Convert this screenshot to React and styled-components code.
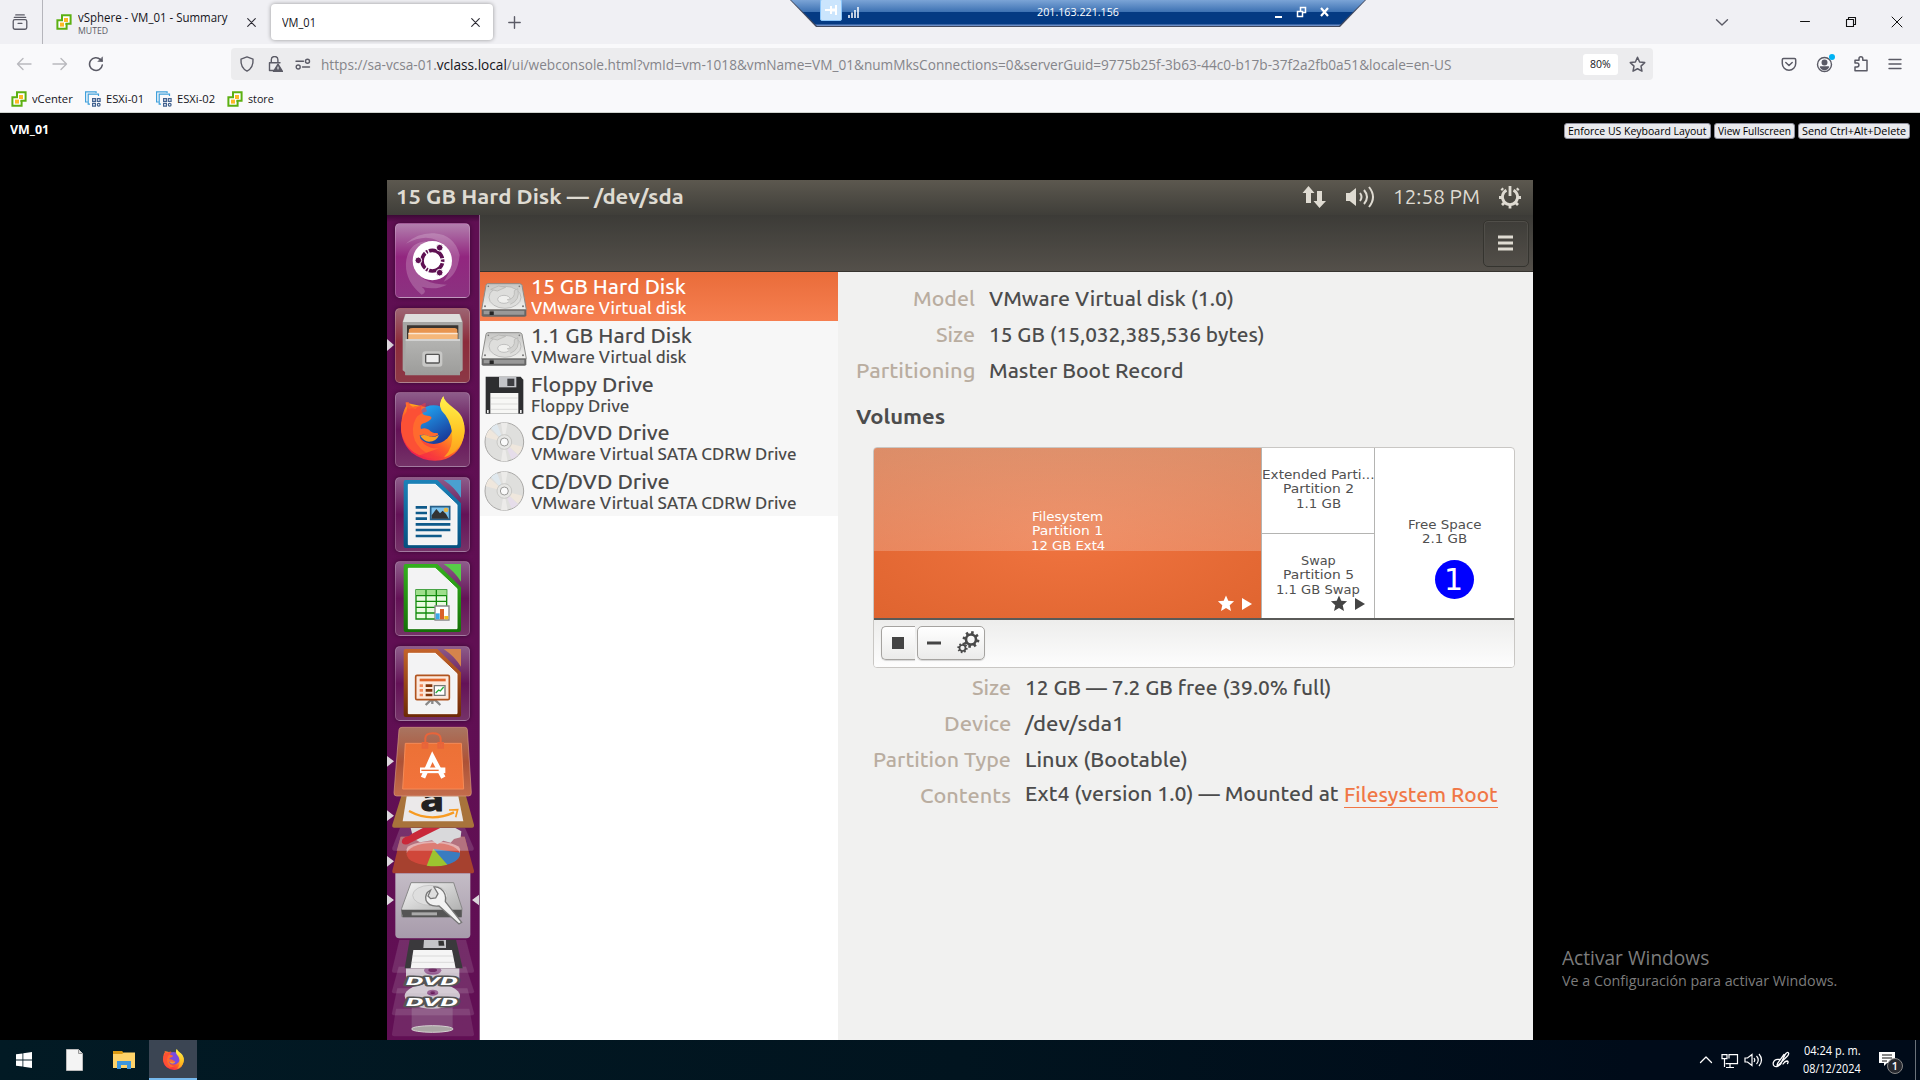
import React, { useLayoutEffect, useRef, useState } from "react";
import styled, { createGlobalStyle } from "styled-components";

const ui = `"Open Sans", "Noto Sans", sans-serif`;
const ubuntu = `Ubuntu, "Noto Sans", sans-serif`;

const Global = createGlobalStyle`
  * { box-sizing: border-box; }
  html, body { margin: 0; width: 1920px; height: 1080px; overflow: hidden; background: #000; }
  svg { display: block; flex: none; }
`;

/* Text whose glyphs are condensed or widened to fill a given width. */
const FitBox = styled.span`
  display: block;
  white-space: nowrap;
  flex: none;
`;
const FitInner = styled.span`
  display: inline-block;
  transform-origin: 0 50%;
`;
function Fit({ w, children }) {
  const ref = useRef(null);
  const [scale, setScale] = useState(1);
  useLayoutEffect(() => {
    setScale(w / ref.current.offsetWidth);
  }, [w]);
  return (
    <FitBox style={{ width: w }}>
      <FitInner ref={ref} style={{ transform: `scaleX(${scale})` }}>{children}</FitInner>
    </FitBox>
  );
}

const Screen = styled.div`
  position: relative;
  width: 1920px;
  height: 1080px;
  display: flex;
  flex-direction: column;
  background: #000;
  font-family: ${ui};
  overflow: hidden;
`;

/* ---------- Browser chrome ---------- */
const TabStrip = styled.div`
  height: 44px;
  display: flex;
  align-items: center;
  background: #f0f0f4;
  color: #15141a;
  font-size: 12px;
`;
const ViewCell = styled.div`
  width: 43px;
  height: 44px;
  padding-left: 12px;
  display: flex;
  align-items: center;
  border-right: 1px solid #b5b5bb;
`;
const Tab = styled.div`
  width: ${(p) => p.$w}px;
  height: 36px;
  padding: 0 ${(p) => p.$pr}px 0 ${(p) => p.$pl}px;
  display: flex;
  align-items: center;
  gap: 6px;
  border-radius: 4px;
  background: ${(p) => (p.$active ? "#fff" : "transparent")};
  box-shadow: ${(p) => (p.$active ? "0 0 4px rgba(0,0,0,.38)" : "none")};
`;
const TabText = styled.div`
  flex: 1;
  display: flex;
  flex-direction: column;
  align-items: flex-start;
  line-height: 15px;
  padding-top: 1px;
`;
const Muted = styled.div`
  font-size: 9px;
  line-height: 11px;
  color: #5b5b66;
`;
const TabButtons = styled.div`
  flex: 1;
  display: flex;
  align-items: center;
  padding-left: 15px;
`;
const WinButtons = styled.div`
  margin-left: auto;
  width: 206px;
  height: 44px;
  display: grid;
  grid-template-columns: 16px 53px 16px 16px;
  column-gap: 30px;
  align-items: center;
  svg { justify-self: end; }
`;
const ToolRow = styled.div`
  height: 40px;
  background: #f9f9fb;
  display: flex;
  align-items: center;
  padding: 0 16px 0 16px;
`;
const NavIcons = styled.div`
  width: 215px;
  display: flex;
  gap: 20px;
`;
const UrlBar = styled.div`
  width: 1422px;
  height: 32px;
  display: flex;
  align-items: center;
  background: #ececee;
  border-radius: 4px;
  padding: 0 7px 0 8px;
  font-size: 13.8px;
  color: #85858a;
  line-height: 20px;
  b { font-weight: 400; color: #15141a; }
`;
const UrlText = styled.div`
  padding-top: 2px;
`;
const UrlIcons = styled.div`
  width: 82px;
  display: flex;
  gap: 12px;
`;
const ZoomChip = styled.div`
  margin-left: auto;
  margin-right: 11px;
  width: 35px;
  height: 21px;
  display: flex;
  align-items: center;
  justify-content: center;
  background: #fff;
  border-radius: 3px;
  color: #15141a;
  font-size: 11px;
`;
const RightIcons = styled.div`
  margin-left: auto;
  margin-right: 1px;
  display: flex;
  align-items: center;
  gap: 18px;
`;
const Bookmarks = styled.div`
  height: 29px;
  background: #f9f9fb;
  border-bottom: 1px solid #cfd3cf;
  display: flex;
  align-items: center;
  padding: 1px 0 0 11px;
  gap: 12px;
  font-size: 11.5px;
  color: #15141a;
`;
const Bookmark = styled.div`
  display: flex;
  align-items: center;
  gap: 5px;
`;

/* ---------- Remote session bar ---------- */
const RdpBar = styled.div`
  position: absolute;
  left: 790px;
  top: 0;
  width: 576px;
  height: 27px;
  clip-path: polygon(0 0, 100% 0, 550px 100%, 26px 100%);
  background: #42485c;
`;
const RdpInner = styled.div`
  height: 26px;
  margin: 0 1px;
  clip-path: polygon(0 0, 100% 0, 548px 100%, 26px 100%);
  background: linear-gradient(#7ba4d6 0, #3f73b4 11.5px, #043a83 12px, #043a83 24px, #6d8dc4 25px);
  display: flex;
  align-items: center;
  padding: 0 33px 3px 29px;
  color: #fff;
  font-size: 11.5px;
`;
const PinButton = styled.div`
  width: 22px;
  height: 22px;
  margin-top: -3px;
  border: 1px solid #8cc6fa;
  border-radius: 2px;
  background: #cbe5fd;
  display: flex;
  align-items: center;
  justify-content: center;
`;
const RdpTitle = styled.div`
  flex: 1;
  padding-left: 173px;
  padding-top: 1px;
  line-height: 16px;
`;

/* ---------- Web console ---------- */
const ConsoleHead = styled.div`
  height: 67px;
  padding: 10px 10px 0 10px;
  display: flex;
  justify-content: space-between;
  align-items: flex-start;
  color: #fff;
  font-size: 11.5px;
`;
const VmName = styled.div`
  font-weight: 700;
  line-height: 14px;
`;
const ConsoleButtons = styled.div`
  display: flex;
  gap: 3px;
`;
const ConsoleButton = styled.div`
  height: 16px;
  width: ${(p) => p.$w}px;
  display: flex;
  align-items: center;
  justify-content: center;
  border: 1px solid #8f8f9d;
  border-radius: 3px;
  background: #e9e9ed;
  color: #000;
  font-size: 11px;
  line-height: 13px;
  padding-bottom: 1px;
`;
const Desktop = styled.div`
  width: 1146px;
  height: 860px;
  margin-left: 387px;
  display: flex;
  flex-direction: column;
  font-family: ${ubuntu};
  font-weight: 500;
  background: #f1f1f0;
`;
const Panel = styled.div`
  height: 35px;
  display: flex;
  align-items: center;
  padding: 0 11px 2px 9px;
  background: linear-gradient(#5c584f, #3f3e39);
  color: #dfdbd2;
  font-size: 20px;
`;
const PanelTitle = styled.div`
  font-weight: 700;
  flex: 1;
`;
const Indicators = styled.div`
  display: flex;
  align-items: center;
  gap: 18px;
  font-weight: 400;
`;
const Body = styled.div`
  height: 825px;
  display: flex;
`;
const Launcher = styled.div`
  width: 93px;
  height: 825px;
  padding-top: 8px;
  background: linear-gradient(#3c0936, #5f0f52 7px, #610f54);
  border-right: 1px solid #8a5c86;
  display: flex;
  flex-direction: column;
`;
const TileRow = styled.div`
  height: 84.6px;
  display: flex;
  align-items: flex-start;
`;
const Gutter = styled.div`
  width: 8px;
  height: 75px;
  display: flex;
  align-items: center;
`;
const Tile = styled.div`
  width: 75px;
  height: 75px;
  border-radius: 5px;
  border: 1px solid rgba(255, 255, 255, 0.2);
  background: ${(p) => p.$bg};
  box-shadow: 0 0 4px rgba(30, 0, 30, 0.6);
  svg { margin: -1px; }
`;
const Stack = styled.div`
  margin-top: -10.6px;
  height: 320px;
`;
const Window = styled.div`
  flex: 1;
  display: flex;
  flex-direction: column;
`;
const HeaderBar = styled.div`
  height: 57px;
  padding: 5px 4px 0 0;
  display: flex;
  justify-content: flex-end;
  background: linear-gradient(#3c3b37, #54504a);
  border-bottom: 1px solid #36342f;
`;
const MenuButton = styled.div`
  width: 46px;
  height: 47px;
  border: 1px solid #35342f;
  border-radius: 5px;
  box-shadow: inset 0 0 0 1px #504e49;
  display: flex;
  align-items: center;
  justify-content: center;
  padding: 0 1px 1px 0;
`;
const Columns = styled.div`
  flex: 1;
  display: flex;
`;
const DriveList = styled.div`
  width: 358px;
  background: #fff;
`;
const Drive = styled.div`
  height: 48.8px;
  display: flex;
  gap: 4px;
  padding-left: 1px;
  background: ${(p) => (p.$on ? "linear-gradient(#e96c3a, #f67f50)" : "#f7f7f7")};
  color: ${(p) => (p.$on ? "#fff" : "#4a4a4a")};
`;
const DriveText = styled.div`
  display: flex;
  flex-direction: column;
  padding-top: 3px;
`;
const DriveTitle = styled.div`
  font-size: 20.5px;
  line-height: 24px;
  height: 23px;
`;
const DriveSub = styled.div`
  font-size: 17.3px;
  line-height: 20px;
`;
const Details = styled.div`
  flex: 1;
  padding: 8px 18px 0;
  font-size: 20.3px;
  color: #4c4c4c;
`;
const Field = styled.div`
  height: 36px;
  display: flex;
  align-items: center;
  gap: ${(p) => p.$gap}px;
`;
const Label = styled.div`
  width: ${(p) => p.$w}px;
  display: flex;
  justify-content: flex-end;
  color: #b9ada0;
`;
const Value = styled.div`
  display: flex;
  gap: 5px;
`;
const Link = styled.span`
  color: #f07746;
  line-height: 25px;
  border-bottom: 1px solid #f07746;
`;
const Heading = styled.div`
  height: 59px;
  padding-top: 15px;
  font-weight: 700;
  line-height: 28px;
`;
const VolumeBox = styled.div`
  position: relative;
  margin-left: 17px;
  width: 642px;
  height: 221px;
  border: 1px solid #c9c7c4;
  border-radius: 4px;
  overflow: hidden;
  display: flex;
  flex-direction: column;
  background: #fff;
`;
const Grid = styled.div`
  height: 172px;
  display: grid;
  grid-template-columns: 387px 113px 1fr;
  border-bottom: 2px solid #5a5a58;
  font-family: "DejaVu Sans", sans-serif;
  font-weight: 400;
  font-size: 12.5px;
  line-height: 14.4px;
  color: #505050;
`;
const Part = styled.div`
  position: relative;
  display: flex;
  flex-direction: column;
  align-items: center;
  justify-content: center;
  padding-bottom: ${(p) => p.$low || 0}px;
  border-left: ${(p) => (p.$line ? "1px solid #b4b4b2" : "none")};
  border-bottom: ${(p) => (p.$under ? "1px solid #b4b4b2" : "none")};
`;
const MainPart = styled(Part)`
  color: #fff;
  background:
    linear-gradient(rgba(214, 214, 205, 0.36), rgba(245, 205, 190, 0.30)) 0 0 / 100% 103px no-repeat,
    radial-gradient(ellipse at 50% 50%, #f07440 0, #df642f 100%);
`;
const Split = styled.div`
  display: grid;
  grid-template-rows: 86px 1fr;
`;
const Marks = styled.div`
  position: absolute;
  right: 8px;
  bottom: 5px;
`;
const Actions = styled.div`
  flex: 1;
  padding: 6px 7px;
  display: flex;
  gap: 2px;
  background: linear-gradient(#ededec, #fdfdfd);
`;
const ActionGroup = styled.div`
  width: ${(p) => p.$w}px;
  height: 34px;
  border: 1px solid #a5a3a0;
  border-right-width: ${(p) => (p.$open ? 0 : 1)}px;
  border-radius: ${(p) => (p.$open ? "5px 0 0 5px" : "5px")};
  background: linear-gradient(#fff, #ebebea);
  box-shadow: 0 1px 1px rgba(0, 0, 0, 0.15);
  display: flex;
  align-items: center;
`;
const Badge = styled.div`
  position: absolute;
  left: 561px;
  top: 112px;
  width: 39px;
  height: 39px;
  border-radius: 50%;
  background: #0000ff;
  color: #fff;
  font: 30px/39px "DejaVu Sans", sans-serif;
  text-align: center;
  text-indent: -2px;
`;
const Lower = styled.div`
  padding-top: 1px;
`;

/* ---------- Host desktop ---------- */
const Watermark = styled.div`
  position: absolute;
  left: 1562px;
  top: 944px;
  color: #7c7c7c;
`;
const WatermarkTitle = styled.div`
  font-size: 19.4px;
  line-height: 28px;
`;
const WatermarkText = styled.div`
  font-size: 14.4px;
  line-height: 18px;
`;
const Taskbar = styled.div`
  height: 40px;
  display: flex;
  background: linear-gradient(90deg, #021a24, #01141f 50%, #000b19 85%);
  color: #fff;
`;
const TaskItem = styled.div`
  width: ${(p) => p.$w}px;
  display: flex;
  align-items: center;
  justify-content: center;
  padding-right: ${(p) => p.$pr || 0}px;
  background: ${(p) => (p.$on ? "#3b4553" : "transparent")};
  border-bottom: ${(p) => (p.$on ? "2px solid #76b9ed" : "none")};
`;
const Tray = styled.div`
  margin-left: auto;
  width: 221px;
  display: flex;
  align-items: center;
`;
const Clock = styled.div`
  width: 89px;
  padding: 0 18px 1px 13px;
  display: flex;
  flex-direction: column;
  align-items: center;
  font-size: 11.8px;
  line-height: 17.5px;
`;
const ShowDesktop = styled.div`
  margin-left: 10px;
  width: 5px;
  height: 40px;
  border-left: 1px solid #6a727a;
`;

/* ---------- Icons ---------- */
const Line = ({ s = 16, c = "#5b5b66", w = 1.4, vb = "0 0 16 16", children }) => (
  <svg width={s} height={s} viewBox={vb} fill="none" stroke={c} strokeWidth={w} strokeLinecap="round" strokeLinejoin="round">
    {children}
  </svg>
);
const VsphereIcon = () => (
  <svg width="16" height="16" viewBox="0 0 16 16">
    <path d="M6 1.2h8.6v8.6h-4v5H1.4V6.200H6z" fill="#fff" stroke="#5cb012" strokeWidth="2" />
    <path d="M6 5.500v1M10.500 10h-1" stroke="#5cb012" strokeWidth="2" />
    <rect x="8" y="4" width="4" height="4" fill="#fdb827" />
    <rect x="4" y="8.600" width="4" height="4" fill="#fdb827" />
  </svg>
);
const EsxiIcon = () => (
  <svg width="16" height="16" viewBox="0 0 16 16" fill="none" stroke="#3fa0dc" strokeWidth="1.200">
    <path d="M2.500 11H.6V.8h10.500V2M5 13.200H3.200V3.200h10.300V5" />
    <g stroke="#41618f" strokeWidth="1.200"><path d="M7.600 7.600h2.800v2.800H7.600zM12.300 7.600h2.800v2.800h-2.800zM7.600 12.400h2.800v2.800H7.600z" /><circle cx="13.700" cy="13.800" r="1.400" /></g>
  </svg>
);
const CloseIcon = ({ s = 9 }) => <Line s={s} vb="0 0 9 9" w={1.1} c="#2b2a33"><path d="M.7.7l7.600 7.600M8.300.7L.7 8.300" /></Line>;
const Star = ({ cx, cy, r, fill }) => {
  const pts = Array.from({ length: 10 }, (_, i) => {
    const a = (Math.PI / 5) * i - Math.PI / 2;
    const q = i % 2 ? r * 0.46 : r;
    return `${cx + q * Math.cos(a)},${cy + q * Math.sin(a)}`;
  }).join(" ");
  return <polygon points={pts} fill={fill} />;
};
const MarksIcon = ({ c }) => (
  <svg width="36" height="18" viewBox="0 0 36 18">
    <Star cx={9} cy={9} r={8.5} fill={c} />
    <path d="M25 3v12l10-6z" fill={c} />
  </svg>
);
const Gear = ({ cx, cy, r, t, c }) => (
  <g fill="none" stroke={c}>
    <circle cx={cx} cy={cy} r={r} strokeWidth={t} />
    {Array.from({ length: 8 }, (_, i) => {
      const a = (Math.PI / 4) * i + 0.2;
      return <path key={i} strokeWidth={t} d={`M${cx + r * Math.cos(a)} ${cy + r * Math.sin(a)}L${cx + (r + t * 1.3) * Math.cos(a)} ${cy + (r + t * 1.3) * Math.sin(a)}`} />;
    })}
  </g>
);
const Pointer = () => <svg width="8" height="12" viewBox="0 0 8 12"><path d="M0 0v12l7-6z" fill="#dcd6dc" /></svg>;

const HddIcon = () => (
  <svg width="46" height="49" viewBox="0 0 138 147">
    <defs><linearGradient id="hd" x1="0" y1="0" x2="0" y2="1"><stop offset="0" stopColor="#c6c6c4" /><stop offset="1" stopColor="#f0f0ee" /></linearGradient></defs>
    <path d="M20 35h96q5 0 7 5l13 73H2l13-73q1-5 5-5z" fill="url(#hd)" stroke="#8d8d8a" strokeWidth="3" />
    <path d="M2 113h134v17q0 4-5 4H7q-5 0-5-4z" fill="#666" />
    <path d="M8 116h18v11H8zM38 116h92v12H38z" fill="#999" />
    <path d="M26 119h12v10H26z" fill="#252525" />
    <ellipse cx="72" cy="76" rx="48" ry="33" fill="#dededc" stroke="#aaa" strokeWidth="2" />
    <ellipse cx="69" cy="82" rx="19" ry="12" fill="#efefed" stroke="#aaa" strokeWidth="2" />
    <path d="M78 83q25-1 22-27l10-6q9 34-22 47M29 52l24-10 21 4-25 11z" fill="#d2d2d0" stroke="#b0b0ae" strokeWidth="2" />
    <g fill="#777"><circle cx="22" cy="43" r="2.500" /><circle cx="115" cy="43" r="2.500" /><circle cx="12" cy="103" r="3" /><circle cx="126" cy="103" r="3" /></g>
  </svg>
);
const FloppyIcon = () => (
  <svg width="46" height="49" viewBox="0 0 138 147">
    <path d="M14 20h105l8 9v102H14z" fill="#2d2e30" />
    <path d="M54 21h52v31H54z" fill="#c3c5c9" /><path d="M79 26h21v22H79z" fill="#3d3e42" />
    <path d="M28 69h84v62H28z" fill="#f7f7f5" />
    <path d="M30 84h80M30 102h80M30 118h80" stroke="#cfcfcb" strokeWidth="2" />
    <path d="M18 120h5v9h-5zM117 120h5v9h-5z" fill="#eee" />
  </svg>
);
const DiscIcon = () => (
  <svg width="46" height="49" viewBox="0 0 138 147">
    <circle cx="70" cy="72" r="58" fill="#dfdfdd" stroke="#aaa9a7" strokeWidth="3" />
    <path d="M69 72L14 58q3-14 12-24zM69 72l55 14q-3 14-13 24z" fill="#efe7dd" />
    <path d="M69 72L30 30q8-8 18-12z" fill="#dfe8ee" />
    <path d="M69 72l42 40q-8 8-19 12z" fill="#e6ddea" />
    <path d="M69 72L60 14h20zM69 72L60 130h20z" fill="#ecebe9" />
    <circle cx="70" cy="72" r="22" fill="#e6e6e4" stroke="#b9b9b7" strokeWidth="2" />
    <circle cx="70" cy="72" r="12" fill="#fafafa" stroke="#9a9a98" strokeWidth="3" />
  </svg>
);

const DashArt = () => (
  <svg width="75" height="75" viewBox="0 0 225 225">
    <path d="M32 62Q70 28 118 31q60 4 76 65-6 64-48 80 40-55 10-100Q110 20 32 62z" fill="#fff" opacity=".2" />
    <path d="M80 215Q25 170 34 110q10-52 60-55-50 30-36 78 20 52 98 52-35 18-76 6 20 15 0 24z" fill="#fff" opacity=".2" />
    <circle cx="112" cy="113" r="59" fill="#fff" />
    <circle cx="112" cy="113" r="31" fill="none" stroke="#5f1152" strokeWidth="11" />
    <g stroke="#fff" strokeWidth="4"><path d="M112 113l38-7M112 113l38 7M112 113L97 77M112 113l-24-29M112 113l-15 36M112 113l-24 29" /></g>
    <circle cx="112" cy="113" r="24" fill="#fff" />
    <g fill="#5f1152" stroke="#fff" strokeWidth="3"><circle cx="70" cy="112" r="10" /><circle cx="134" cy="74" r="10" /><circle cx="134" cy="149" r="10" /></g>
  </svg>
);
const FilesArt = () => (
  <svg width="75" height="75" viewBox="0 0 225 225">
    <defs><linearGradient id="cab" x1="0" y1="0" x2="0" y2="1"><stop offset="0" stopColor="#b4b4b2" /><stop offset="1" stopColor="#9c9c9a" /></linearGradient></defs>
    <path d="M30 19h165l8 22v146l-9 6v8H31v-8l-8-6V41z" fill="#a5a5a3" />
    <path d="M32 18h161l8 24H24z" fill="#dededc" />
    <path d="M36 52h154v44H36z" fill="#39342f" />
    <path d="M42 64q3-4 12-4h125q8 0 8 8v28H40z" fill="#e89550" /><path d="M40 76h148v20H40z" fill="#f5b77a" /><path d="M40 74h148v5H40z" fill="#fff" opacity=".7" />
    <path d="M32 94h163v108H31z" fill="url(#cab)" /><path d="M32 94h163v4H32z" fill="#ddd" />
    <rect x="82" y="130" width="60" height="46" rx="9" fill="#c8c8c6" /><rect x="92" y="139" width="41" height="26" rx="3" fill="#eee" stroke="#555" strokeWidth="4" />
  </svg>
);
const FirefoxArt = ({ s = 75, vb = "0 0 225 225", core = "url(#fx2)" }) => (
  <svg width={s} height={s} viewBox={vb}>
    <defs>
      <linearGradient id="fx1" x1=".8" y1=".1" x2=".2" y2=".9"><stop offset="0" stopColor="#fff04a" /><stop offset=".35" stopColor="#ffad1c" /><stop offset=".65" stopColor="#ff5a2c" /><stop offset="1" stopColor="#f0204e" /></linearGradient>
      <linearGradient id="fx2" x1="0" y1="0" x2=".6" y2="1"><stop offset="0" stopColor="#21b4ff" /><stop offset="1" stopColor="#1a3b9a" /></linearGradient>
      <linearGradient id="fx3" x1="0" y1="0" x2="0" y2="1"><stop offset="0" stopColor="#fff24d" /><stop offset=".6" stopColor="#ffc423" /><stop offset="1" stopColor="#ff9a20" /></linearGradient>
    </defs>
    {/* tail and body ring around the globe */}
    <path d="M40 34Q24 52 20 84q-10 60 30 98 40 30 88 23 60-14 70-80 4-50-26-72-36-26-37-40-10 14-10 42z" fill="url(#fx1)" />
    <circle cx="116" cy="98" r="58" fill={core} />
    <path d="M145 13q4 22 26 38 40 30 38 65-5 60-62 80 30-30 24-76-6-40-31-64-12-20 5-43z" fill="url(#fx3)" />
    {/* head, muzzle and paw */}
    <path d="M42 31Q36 44 34 60 18 80 18 108q6 60 56 82l60-22q-24 4-44-10-14-10-16-28 14-4 26 2 12 6 28-3 4-6-4-6-14 0-22-10-12-8-24-2-4-10 4-16 24-8 28-18-2-6-12-6-10 0-14-4-8-14-4-28-14 4-18 12-12-4-20 0-10-2-10-20z" fill="#ff6a2e" />
    <path d="M42 31Q36 44 34 60 18 80 18 108q6 60 56 82 34 16 70 6-60-4-84-50-14-36 2-66 8-14 34-22-6-10-4-26-14 4-18 12-12-4-20 0-10-2-12-13z" fill="#fa3a3c" opacity=".55" />
    <path d="M76 131q14-5 26 2 14 6 30-4-8 20-30 20-16-2-26-18z" fill="#ffa122" />
  </svg>
);
const OfficeArt = ({ c, d, l, children }) => (
  <svg width="75" height="75" viewBox="0 0 225 225">
    <defs><linearGradient id={`of${c.slice(1)}`} x1="0" y1="0" x2="0" y2="1"><stop offset="0" stopColor={c} /><stop offset="1" stopColor={d} /></linearGradient></defs>
    <path d="M32 9h95l71 70v128q0 6-6 6H32q-6 0-6-6V15q0-6 6-6z" fill={`url(#of${c.slice(1)})`} />
    <path d="M146 9h52v53q-10-15-22-28T146 9z" fill={l} />
    <path d="M40 22h81l65 61v120H40z" fill="#f3f3f4" stroke="#fff" strokeWidth="3" />
    {children}
  </svg>
);
const WriterArt = () => (
  <OfficeArt c="#1b82b8" d="#06507f" l="#4aa0d0">
    <path d="M62 91h34M62 108h34M62 125h34M62 142h104M62 159h104M62 177h78" stroke="#0e5a8a" strokeWidth="8" />
    <path d="M107 89h57v38h-57z" fill="#7fc4ee" stroke="#27608a" strokeWidth="5" /><path d="M110 125v-10l14-19 11 13 8-8 10 10 8 14z" fill="#333" /><circle cx="153" cy="99" r="7" fill="#e5b84a" />
  </OfficeArt>
);
const CalcArt = () => (
  <OfficeArt c="#35b01e" d="#157008" l="#57cc48">
    <path d="M63 87h92v87H63z" fill="#e8fbe0" stroke="#128a0c" strokeWidth="4" /><path d="M63 87h92v17H63z" fill="#9fdf8c" />
    <path d="M63 104h92M63 121h92M63 139h92M63 156h92M93 87v87M124 87v87" stroke="#128a0c" strokeWidth="4" />
    <path d="M120 135h42v42h-42z" fill="#fff" stroke="#888" strokeWidth="4" /><path d="M122 157h12v18h-12z" fill="#3aa8e8" /><path d="M135 144h12v31h-12z" fill="#d9622b" /><path d="M148 165h12v10h-12z" fill="#f0be20" />
  </OfficeArt>
);
const ImpressArt = () => (
  <OfficeArt c="#c4632a" d="#6d2a05" l="#d5844c">
    <path d="M92 177l16-15h12l16 15M112 160v14" stroke="#888" strokeWidth="7" fill="none" />
    <rect x="62" y="88" width="101" height="73" rx="4" fill="#fce8dc" stroke="#b1541f" strokeWidth="5" />
    <path d="M74 102h78" stroke="#e0652a" strokeWidth="8" />
    <path d="M74 119h10M74 133h10M74 147h10" stroke="#f28a5c" strokeWidth="8" /><path d="M92 119h20M92 133h20M92 147h20" stroke="#82340a" strokeWidth="8" />
    <path d="M118 119h32v29h-32z" fill="#fff" stroke="#777" strokeWidth="4" /><path d="M122 141l9-9 5 3 10-12" stroke="#24ac3a" strokeWidth="4" fill="none" />
  </OfficeArt>
);

const StackArt = () => (
  <svg width="92" height="320" viewBox="21 0 276 960">
    <defs>
      <linearGradient id="sw" x1="0" y1="0" x2="0" y2="1"><stop offset="0" stopColor="#a97561" /><stop offset=".5" stopColor="#ad5236" /><stop offset="1" stopColor="#c36c4c" /></linearGradient>
      <linearGradient id="bag" x1="0" y1="0" x2="0" y2="1"><stop offset="0" stopColor="#ec7136" /><stop offset="1" stopColor="#f2733c" /></linearGradient>
      <linearGradient id="dk" x1="0" y1="0" x2="0" y2="1"><stop offset="0" stopColor="#c4bcc6" /><stop offset="1" stopColor="#a79bab" /></linearGradient>
      <linearGradient id="met" x1="0" y1="0" x2="1" y2="1"><stop offset="0" stopColor="#f6f6f6" /><stop offset="1" stopColor="#a9a9a9" /></linearGradient>
    </defs>
    {/* bin */}
    <path d="M48 866h220l14 76q1 7-6 7H42q-7 0-6-7z" fill="#fff" opacity=".1" />
    <path d="M95 862h123v65q-8 9-61 9t-62-9z" fill="#a48aa4" opacity=".35" /><ellipse cx="157" cy="927" rx="62" ry="10" fill="#aaa6a4" stroke="#d6d2d2" strokeWidth="3" />
    {/* second disc */}
    <path d="M52 805h210l20 75q1 6-6 6H42q-7 0-6-6z" fill="#fff" opacity=".12" stroke="#fff" strokeOpacity=".4" />
    <ellipse cx="157" cy="828" rx="83" ry="38" fill="#cfc5cf" /><ellipse cx="158" cy="818" rx="17" ry="9" fill="#8d4f88" /><ellipse cx="158" cy="818" rx="7" ry="4" fill="#5e0f52" />
    <text x="156" y="859" textAnchor="middle" textLength="158" lengthAdjust="spacingAndGlyphs" fontFamily="DejaVu Sans" fontWeight="700" fontStyle="italic" fontSize="32" fill="#fff" stroke="#555" strokeWidth="9" strokeLinejoin="round" paintOrder="stroke">DVD</text>
    {/* first disc */}
    <path d="M56 740h202l24 74q1 6-6 6H42q-7 0-6-6z" fill="#fff" opacity=".12" stroke="#fff" strokeOpacity=".4" />
    <path d="M78 745h160v42H78z" fill="#cfc5cf" /><ellipse cx="158" cy="751" rx="26" ry="13" fill="#93598f" /><ellipse cx="158" cy="750" rx="13" ry="6" fill="#5e0f52" />
    <text x="156" y="794" textAnchor="middle" textLength="158" lengthAdjust="spacingAndGlyphs" fontFamily="DejaVu Sans" fontWeight="700" fontStyle="italic" fontSize="32" fill="#fff" stroke="#555" strokeWidth="9" strokeLinejoin="round" paintOrder="stroke">DVD</text>
    {/* floppy */}
    <path d="M58 660h200l24 92q1 6-6 6H42q-7 0-6-6z" fill="#fff" opacity=".12" stroke="#fff" strokeOpacity=".4" />
    <path d="M89 659h139l20 86H74z" fill="#3a393c" /><path d="M132 660h66v24h-68z" fill="#c4c4c8" /><path d="M175 662h16l2 15h-17z" fill="#333" />
    <path d="M100 690h116l11 55H92z" fill="#f5f5f5" /><path d="M98 708h122M95 727h128" stroke="#ccc" strokeWidth="2" />
    {/* disk usage */}
    <path d="M62 350h192l28 102q1 8-7 8H43q-7 0-6-8z" fill="#a6412f" /><path d="M62 350h192l11 42H50z" fill="#94384a" />
    <path d="M80 400v-12a80 24 0 01160 0v12z" fill="#d99090" />
    <ellipse cx="160" cy="403" rx="80" ry="34" fill="#d0473a" /><path d="M160 386l80 12q2 24-40 36z" fill="#3a7cc0" /><path d="M160 386l42 48q-30 8-62 3z" fill="#9cc430" />
    <path d="M62 350h192l11 42H50z" fill="#fff" opacity=".18" />
    {/* system settings */}
    <path d="M60 324h195l26 60q1 8-6 8H43q-7 0-6-8z" fill="#fff" opacity=".14" stroke="#fff" strokeOpacity=".4" />
    <path d="M92 324h134l18 10-2 18-20 5-10 11-22-6-18 11-16-12-18 3-18 3-20-12z" fill="#d9d9db" />
    <path d="M130 323h52l-92 46q-14 9-24 0-3-12 10-18 14-3 20-10z" fill="#c9283a" />
    {/* web shop */}
    <path d="M64 228h194l24 86q1 9-6 9H43q-8 0-6-9z" fill="#a8733b" />
    <path d="M80 229h155l15 75H68z" fill="#ebe9ea" />
    <clipPath id="shop"><path d="M80 231h155v73H80z" /></clipPath>
    <text clipPath="url(#shop)" x="157" y="273" textAnchor="middle" fontFamily="Open Sans, sans-serif" fontWeight="700" fontSize="98" textLength="72" lengthAdjust="spacingAndGlyphs" stroke="#222" strokeWidth="3" fill="#222">a</text>
    <path d="M87 273q66 36 135 4" fill="none" stroke="#f79b23" strokeWidth="7" /><path d="M207 270l26-1-6 23" fill="none" stroke="#f79b23" strokeWidth="5" />
    {/* software */}
    <path d="M66 22h188q7 0 8 7l12 189q0 10-8 10H50q-9 0-8-10L57 29q1-7 9-7z" fill="url(#sw)" stroke="#d59a82" strokeWidth="2" />
    <path d="M76 70h168l7 137H68z" fill="url(#bag)" stroke="#f58b57" strokeWidth="3" />
    <path d="M136 83V55q0-15 22-15t24 15v28M128 69h14v14h-14zM175 69h14v14h-14z" fill="none" stroke="#e8643a" strokeWidth="6" />
    <g stroke="#fff" fill="none"><path d="M129 173l28-63 33 63" strokeWidth="14" /><path d="M120 151h76" strokeWidth="17" /><path d="M124 151h52" stroke="#ee7138" strokeWidth="4" /></g>
    {/* disks */}
    <path d="M46 460h225v183q0 12-12 12H58q-12 0-12-12z" fill="url(#dk)" />
    <path d="M93 488h128l25 77-2 25H65v-25z" fill="url(#met)" stroke="#888" strokeWidth="3" />
    <path d="M64 569h181v23H68z" fill="#555" /><path d="M95 577h76v9H95z" fill="#aaa" />
    <ellipse cx="150" cy="526" rx="52" ry="30" fill="#dedede" stroke="#bbb" strokeWidth="2" />
    <path d="M152 510q-19 10-14 31 8 20 39 17l60 54 8-5-49-62q4-25-13-38-12-8-21-6l12 20-7 13-15 2-8-8z" fill="#f2f2f2" stroke="#777" strokeWidth="4" />
    <g fill="#dcd6dc"><path d="M21 108v32l21-16zM21 271v32l21-16zM21 408v32l21-16zM21 524v32l21-16zM297 524v32l-21-16z" /></g>
  </svg>
);

const tiles = [
  ["linear-gradient(#b27fae, #92267f 45%, #8b3280)", DashArt],
  ["linear-gradient(#9d6472, #8c2c3b 45%, #8c3846)", FilesArt, true],
  ["linear-gradient(#8d5c8a, #641257 50%, #753268)", FirefoxArt],
  ["linear-gradient(#8d5c8a, #641257 50%, #753268)", WriterArt],
  ["linear-gradient(#8d5c8a, #641257 50%, #753268)", CalcArt],
  ["linear-gradient(#8d5c8a, #641257 50%, #753268)", ImpressArt],
];
const drives = [
  [HddIcon, "15 GB Hard Disk", 155, "VMware Virtual disk", 156, true],
  [HddIcon, "1.1 GB Hard Disk", 161, "VMware Virtual disk", 156],
  [FloppyIcon, "Floppy Drive", 123, "Floppy Drive", 98],
  [DiscIcon, "CD/DVD Drive", 139, "VMware Virtual SATA CDRW Drive", 266],
  [DiscIcon, "CD/DVD Drive", 139, "VMware Virtual SATA CDRW Drive", 266],
];
const diskFields = [
  ["Model", 62, "VMware Virtual disk (1.0)", 245],
  ["Size", 39, "15 GB (15,032,385,536 bytes)", 275],
  ["Partitioning", 119, "Master Boot Record", 195],
];
const volumeFields = [
  ["Size", 39, "12 GB — 7.2 GB free (39.0% full)", 306],
  ["Device", 67, "/dev/sda1", 99],
  ["Partition Type", 138, "Linux (Bootable)", 163],
  ["Contents", 91, "Ext4 (version 1.0) — Mounted at", 314, "Filesystem Root"],
];

export default function App() {
  return (
    <Screen>
      <Global />
      <TabStrip>
        <ViewCell>
          <Line s={16} vb="0 0 17 17"><path d="M4 1h9M2.500 3.600h12" /><rect x="1.300" y="6" width="14.400" height="10.200" rx="1.800" /><path d="M6.500 10h4" /></Line>
        </ViewCell>
        <Tab $w={228} $pl={13} $pr={15}>
          <VsphereIcon />
          <TabText><Fit w={150}>vSphere - VM_01 - Summary</Fit><Muted><Fit w={30}>MUTED</Fit></Muted></TabText>
          <CloseIcon />
        </Tab>
        <Tab $w={222} $pl={11} $pr={13} $active>
          <TabText><Fit w={34}>VM_01</Fit></TabText>
          <CloseIcon />
        </Tab>
        <TabButtons><Line s={13} vb="0 0 13 13"><path d="M6.500 .8v11.400M.8 6.500h11.400" /></Line></TabButtons>
        <WinButtons>
          <Line><path d="M2.500 5.800L8 11l5.500-5.200" /></Line>
          <Line c="#111" w={1}><path d="M3.500 7.500h9" /></Line>
          <Line c="#111" w={1.1}><path d="M3.500 5.500h7v7h-7zM5.500 5.200V3.500h7v7h-1.700" /></Line>
          <Line c="#111" w={1}><path d="M3 3l10 10M13 3L3 13" /></Line>
        </WinButtons>
      </TabStrip>
      <ToolRow>
        <NavIcons>
          <Line c="#b9b9be"><path d="M15 8H1.500M7 2.500L1.500 8 7 13.500" /></Line>
          <Line c="#b9b9be"><path d="M1 8h13.500M9 2.500L14.500 8 9 13.500" /></Line>
          <Line w={1.6}><path d="M14.300 9A6.400 6.400 0 1 1 12.500 3.600L14 5" /><path d="M14.500 1.200v4.300h-4.300z" fill="#5b5b66" strokeWidth=".6" /></Line>
        </NavIcons>
        <UrlBar>
          <UrlIcons>
            <Line><path d="M8 .9l6 2.200c.4 5.300-1.500 9.700-6 12-4.500-2.300-6.400-6.700-6-12z" /></Line>
            <Line><path d="M7 14.500H2.500V6.800H13M4.300 6.500V3.800a3.300 3.300 0 016.600 0v2.700" /><path d="M11 8.200l4.500 7.300h-9z" fill="#5b5b66" /><path d="M11 11v2" stroke="#fff" strokeWidth="1" /></Line>
            <Line><path d="M1 5.200h7.500M7.500 11h7" /><circle cx="12.500" cy="5.200" r="2" /><circle cx="3.200" cy="11" r="2" /></Line>
          </UrlIcons>
          <UrlText><Fit w={1130}>https://sa-vcsa-01.<b>vclass.local</b>/ui/webconsole.html?vmId=vm-1018&amp;vmName=VM_01&amp;numMksConnections=0&amp;serverGuid=9775b25f-3b63-44c0-b17b-37f2a2fb0a51&amp;locale=en-US</Fit></UrlText>
          <ZoomChip><Fit w={21}>80%</Fit></ZoomChip>
          <Line s={17} vb="0 0 16 16"><path d="M8 1.200l2 4.400 4.800.6-3.500 3.300.9 4.800L8 12l-4.200 2.300.9-4.800L1.200 6.200 6 5.600z" /></Line>
        </UrlBar>
        <RightIcons>
          <Line w={1.5}><path d="M2.500 2.500h11q1.200 0 1.200 1.200v3.800a6.700 6.700 0 01-13.400 0V3.700q0-1.200 1.200-1.200z" /><path d="M4.800 6.500L8 9.500l3.200-3" /></Line>
          <Line s={20} vb="0 0 20 20"><circle cx="9.500" cy="10.500" r="7" /><circle cx="9.500" cy="8.500" r="2.300" fill="#5b5b66" /><path d="M5.500 13h8q-1.200 2.500-4 2.500t-4-2.500z" fill="#5b5b66" /><circle cx="17" cy="3" r="3" fill="#00b3f4" stroke="none" /></Line>
          <Line w={1.5}><path d="M2 15V11.200h2a1.800 1.800 0 000-3.800H2V4.500h4V3a1.900 1.900 0 013.800 0v1.500h4.200V15z" transform="translate(0 -.3)" /></Line>
          <Line><path d="M2 3.500h12M2 8h12M2 12.500h12" /></Line>
        </RightIcons>
      </ToolRow>
      <Bookmarks>
        <Bookmark><VsphereIcon /><Fit w={41}>vCenter</Fit></Bookmark>
        <Bookmark><EsxiIcon /><Fit w={38}>ESXi-01</Fit></Bookmark>
        <Bookmark><EsxiIcon /><Fit w={38}>ESXi-02</Fit></Bookmark>
        <Bookmark><VsphereIcon /><Fit w={26}>store</Fit></Bookmark>
      </Bookmarks>

      <ConsoleHead>
        <VmName><Fit w={39}>VM_01</Fit></VmName>
        <ConsoleButtons>
          <ConsoleButton $w={147}><Fit w={139}>Enforce US Keyboard Layout</Fit></ConsoleButton>
          <ConsoleButton $w={81}><Fit w={73}>View Fullscreen</Fit></ConsoleButton>
          <ConsoleButton $w={112}><Fit w={104}>Send Ctrl+Alt+Delete</Fit></ConsoleButton>
        </ConsoleButtons>
      </ConsoleHead>

      <Desktop>
        <Panel>
          <PanelTitle><Fit w={288}>15 GB Hard Disk — /dev/sda</Fit></PanelTitle>
          <Indicators>
            <svg width="26" height="24" viewBox="0 0 26 24" fill="#dfdbd2"><path d="M7.500 1l6 7H10v10H5V8H1.500zM18.500 23l-6-7H16V6h5v10h4z" /></svg>
            <svg width="30" height="24" viewBox="0 0 30 24" fill="none" stroke="#dfdbd2" strokeWidth="2"><path d="M2 9h3l5-4v14l-5-4H2z" fill="#dfdbd2" /><path d="M15 8q3 4 0 8M19 5q6 7 0 14M24 2q8 10 0 20" /></svg>
            <Fit w={87}>12:58 PM</Fit>
            <svg width="24" height="24" viewBox="0 0 24 24" fill="none" stroke="#dfdbd2" strokeWidth="2.800"><path d="M8.500 5.200a7.600 7.600 0 1 0 7 0" /><path d="M12 1v10" /><path d="M5 5L3.500 3.500M19 5l1.500-1.500M4.500 12.500H1M19.500 12.500H23M6 18l-2 2M18 18l2 2M12 20v3.500" /></svg>
          </Indicators>
        </Panel>
        <Body>
          <Launcher>
            {tiles.map(([bg, Art, open], i) => (
              <TileRow key={i}>
                <Gutter>{open && <Pointer />}</Gutter>
                <Tile $bg={bg}><Art /></Tile>
              </TileRow>
            ))}
            <Stack><StackArt /></Stack>
          </Launcher>
          <Window>
            <HeaderBar>
              <MenuButton><svg width="15" height="16" viewBox="0 0 15 16"><path d="M0 2h15M0 8h15M0 14h15" stroke="#dfdbd2" strokeWidth="3" /></svg></MenuButton>
            </HeaderBar>
            <Columns>
              <DriveList>
                {drives.map(([Icon, title, tw, sub, sw, on], i) => (
                  <Drive key={i} $on={on}>
                    <Icon />
                    <DriveText>
                      <DriveTitle><Fit w={tw}>{title}</Fit></DriveTitle>
                      <DriveSub><Fit w={sw}>{sub}</Fit></DriveSub>
                    </DriveText>
                  </Drive>
                ))}
              </DriveList>
              <Details>
                {diskFields.map(([label, lw, value, vw]) => (
                  <Field key={label} $gap={14}>
                    <Label $w={119}><Fit w={lw}>{label}</Fit></Label>
                    <Value><Fit w={vw}>{value}</Fit></Value>
                  </Field>
                ))}
                <Heading><Fit w={89}>Volumes</Fit></Heading>
                <VolumeBox>
                  <Grid>
                    <MainPart $low={3}>
                      <Fit w={71}>Filesystem</Fit><Fit w={71}>Partition 1</Fit><Fit w={74}>12 GB Ext4</Fit>
                      <Marks><MarksIcon c="#fff" /></Marks>
                    </MainPart>
                    <Split>
                      <Part $line $under $low={2}><Fit w={112}>Extended Parti...</Fit><Fit w={71}>Partition 2</Fit><Fit w={45}>1.1 GB</Fit></Part>
                      <Part $line $low={1}><Fit w={35}>Swap</Fit><Fit w={71}>Partition 5</Fit><Fit w={84}>1.1 GB Swap</Fit><Marks><MarksIcon c="#444" /></Marks></Part>
                    </Split>
                    <Part $line $low={2}><Fit w={74}>Free Space</Fit><Fit w={45}>2.1 GB</Fit></Part>
                  </Grid>
                  <Actions>
                    <ActionGroup $w={34} $open><svg width="33" height="32" viewBox="0 0 33 32"><path d="M10 10h12v12H10z" fill="#444" /></svg></ActionGroup>
                    <ActionGroup $w={68}>
                      <svg width="66" height="32" viewBox="0 0 66 32"><path d="M9 16h14" stroke="#444" strokeWidth="3" /><Gear cx={53} cy={12.500} r={5} t={2.6} c="#4a4a4a" /><Gear cx={44.500} cy={21} r={3} t={1.7} c="#4a4a4a" /></svg>
                    </ActionGroup>
                  </Actions>
                  <Badge>1</Badge>
                </VolumeBox>
                <Lower>
                  {volumeFields.map(([label, lw, value, vw, link]) => (
                    <Field key={label} $gap={14}>
                      <Label $w={155}><Fit w={lw}>{label}</Fit></Label>
                      <Value><Fit w={vw}>{value}</Fit>{link && <Link><Fit w={154}>{link}</Fit></Link>}</Value>
                    </Field>
                  ))}
                </Lower>
              </Details>
            </Columns>
          </Window>
        </Body>
      </Desktop>

      <Taskbar>
        <TaskItem $w={48}><svg width="16" height="16" viewBox="0 0 16 16" fill="#fff"><path d="M0 2.300l6.500-.9v6.200H0zM7.300 1.300L16 0v7.600H7.300zM0 8.400h6.500v6.200L0 13.700zM7.300 8.400H16V16l-8.700-1.300z" /></svg></TaskItem>
        <TaskItem $w={53}><svg width="17" height="22" viewBox="0 0 17 22"><path d="M.5.5h12l4 4v17H.5z" fill="#f4f4f4" stroke="#bbb" /><path d="M12.500.5v4h4" fill="#ddd" stroke="#999" /></svg></TaskItem>
        <TaskItem $w={48} $pr={2}><svg width="22" height="20" viewBox="0 0 22 20"><path d="M0 1h9l2 2v3H0z" fill="#dc9a12" /><path d="M0 4h9l2-1.500h11V18H0z" fill="#ffd369" /><path d="M4 19v-8h14v8h-4v-4H8v4z" fill="#3d96de" /></svg></TaskItem>
        <TaskItem $w={48} $on><FirefoxArt s={23} vb="8 4 212 212" core="#7a4be0" /></TaskItem>
        <Tray>
          <Line s={14} vb="0 0 14 14" c="#fff" w={1.3}><path d="M1.500 9.500L7 4l5.500 5.500" /></Line>
          <svg width="59" height="20" viewBox="0 0 59 20" fill="none" stroke="#fff" strokeWidth="1.200"><path d="M13 4.600h8.500v9H9.600M14 14v3.500M10 17.500h8M6 4.600h5v4H6zM8.500 9v8M13 8.500V4" transform="translate(3 0)" /><path d="M34 8h2.500L41 4.500v11L36.500 12H34zM43 8q1.600 2 0 4M45.500 6q3.500 4 0 8M48 4q5 6 0 12" transform="translate(-2 0)" /></svg>
          <Line s={18} vb="0 0 18 18" c="#fff" w={1.3}><path d="M7.500 8.500q-5-1-6.300 3.500-.3 4 4 3.500 4-1.500 4.500-5L13.500 3q2-2.500 3-1 .6 1.200-1 3L7 13.500l-2 .7.700-2L12 3.500M11 13q2-3 4-3 2 .5.500 2.500" /></Line>
          <Clock><Fit w={57}>04:24 p. m.</Fit><Fit w={58}>08/12/2024</Fit></Clock>
          <svg width="26" height="28" viewBox="0 0 26 28"><path d="M0 6h16v11H8l-3 3v-3H0z" fill="#fff" /><path d="M3 9h10M3 12h10M3 15h5" stroke="#111" strokeWidth="1.200" /><circle cx="16" cy="20" r="7.500" fill="#26282e" stroke="#888" /><text x="16" y="24" textAnchor="middle" fontFamily="Open Sans, sans-serif" fontWeight="600" fontSize="11" fill="#fff">1</text></svg>
          <ShowDesktop />
        </Tray>
      </Taskbar>

      <RdpBar>
        <RdpInner>
          <PinButton><svg width="14" height="12" viewBox="0 0 14 12"><path d="M1 6h5M12 1v10M7 2v8" stroke="#fff" strokeWidth="2" /><path d="M7 4.500h5v3H7z" fill="#fff" /></svg></PinButton>
          <svg width="22" height="14" viewBox="0 0 22 14"><path d="M7 13v-3M10 13V7.500M13 13V5M16 13V2" stroke="#fff" strokeWidth="1.500" /></svg>
          <RdpTitle><Fit w={82}>201.163.221.156</Fit></RdpTitle>
          <svg width="64" height="14" viewBox="0 0 64 14" fill="none" stroke="#fff"><path d="M7 12h7" strokeWidth="2" /><path d="M29.500 6.500h5v5h-5zM32.500 6V2.500h5v5H35" strokeWidth="1.500" /><path d="M53 3l7 8M60 3l-7 8" strokeWidth="2.200" /></svg>
        </RdpInner>
      </RdpBar>

      <Watermark>
        <WatermarkTitle><Fit w={147}>Activar Windows</Fit></WatermarkTitle>
        <WatermarkText><Fit w={275}>Ve a Configuración para activar Windows.</Fit></WatermarkText>
      </Watermark>
    </Screen>
  );
}
